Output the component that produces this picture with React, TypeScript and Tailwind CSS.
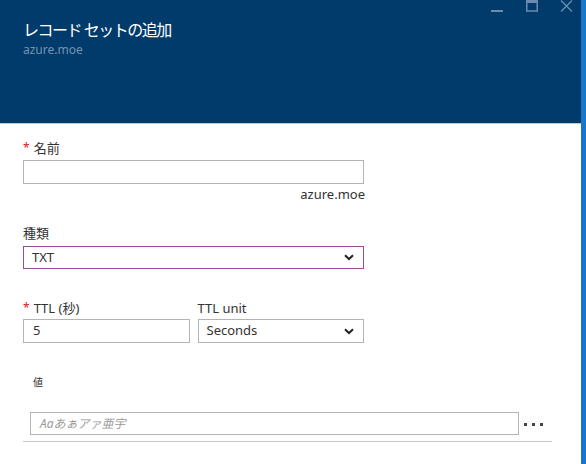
import React from "react";

const jp = { fontFamily: '"Segoe UI", "Noto Sans", "Noto Sans CJK JP", sans-serif' };

function Chevron() {
  return (
    <svg width="10" height="7" viewBox="0 0 10 7" className="shrink-0">
      <path d="M1 1.2 L5 5 L9 1.2" fill="none" stroke="#222" strokeWidth="2" />
    </svg>
  );
}

function Star() {
  return <span className="text-[#e81123] text-[12px] mr-[4px] leading-none">*</span>;
}

export default function App() {
  return (
    <div className="flex w-[586px] h-[464px] bg-white overflow-hidden" style={jp}>
      <div className="flex-1 flex flex-col">
        <div className="h-[124px] bg-[#003b6b] border-b border-[#c6c6c6] flex justify-between shrink-0">
          <div className="pl-[23px] pt-[19px]">
            <div className="text-[16px] text-white leading-[22px] tracking-[-1.5px]">レコード セットの追加</div>
            <div className="text-[12px] text-[#7893b1] leading-[14px] mt-[2px]">azure.moe</div>
          </div>
          <div className="flex items-start gap-[22px] pr-[8px]">
            <svg width="13" height="12" viewBox="0 0 13 12">
              <rect x="0" y="10" width="12" height="2" fill="#6d8bae" />
            </svg>
            <svg width="12" height="12" viewBox="0 0 12 12">
              <rect x="0.75" y="-1" width="10.5" height="12" fill="none" stroke="#6d8bae" strokeWidth="1.5" />
              <rect x="0" y="0" width="12" height="3" fill="#6d8bae" />
            </svg>
            <svg width="13" height="12" viewBox="0 0 13 12">
              <path d="M1 0.5 L12 11.5 M12 0.5 L1 11.5" stroke="#6d8bae" strokeWidth="1.4" />
            </svg>
          </div>
        </div>

        <div className="pl-[23px] pt-[16px] text-[#333]">
          <div className="w-[341px]">
            <div className="flex items-center text-[13px] leading-[16px] h-[16px]">
              <Star />
              <span>名前</span>
            </div>
            <div className="mt-[4px] h-[24px] border border-[#b4b4b4]" />
            <div className="text-right text-[13px] leading-[16px] mt-[2px] mr-[-1px]">azure.moe</div>

            <div className="mt-[23px] text-[13px] leading-[16px]">種類</div>
            <div className="mt-[5px] h-[23px] border border-[#9b4c99] flex items-center justify-between pl-[8px] pr-[9px] text-[13px]">
              <span>TXT</span>
              <Chevron />
            </div>

            <div className="mt-[31px] flex gap-[8px]">
              <div className="flex-1">
                <div className="flex items-center text-[13px] leading-[16px] h-[16px]">
                  <Star />
                  <span>TTL (秒)</span>
                </div>
                <div className="mt-[3px] h-[24px] border border-[#b4b4b4] flex items-center pl-[9px] text-[13px]">5</div>
              </div>
              <div className="flex-1">
                <div className="text-[13px] leading-[16px] h-[16px]">TTL unit</div>
                <div className="mt-[3px] h-[24px] border border-[#b4b4b4] flex items-center justify-between pl-[8px] pr-[9px] text-[13px]">
                  <span>Seconds</span>
                  <Chevron />
                </div>
              </div>
            </div>
          </div>

          <div className="w-[529px]">
            <div className="mt-[33px] pl-[10px] text-[10px] leading-[12px] text-[#333]">値</div>
            <div className="mt-[24px] flex items-center pl-[7px]">
              <div className="w-[489px] h-[23px] border border-[#b4b4b4] flex items-center pl-[9px] text-[12px] italic text-[#999]">
                Aaあぁアァ亜宇
              </div>
              <div className="flex gap-[5px] ml-[5px] mt-[1px]">
                <span className="w-[3px] h-[3px] bg-[#444]" />
                <span className="w-[3px] h-[3px] bg-[#444]" />
                <span className="w-[3px] h-[3px] bg-[#444]" />
              </div>
            </div>
            <div className="mt-[6px] h-px bg-[#c8c8c8]" />
          </div>
        </div>
      </div>
      <div className="w-[5px] bg-[#1677cf] shrink-0" />
    </div>
  );
}
